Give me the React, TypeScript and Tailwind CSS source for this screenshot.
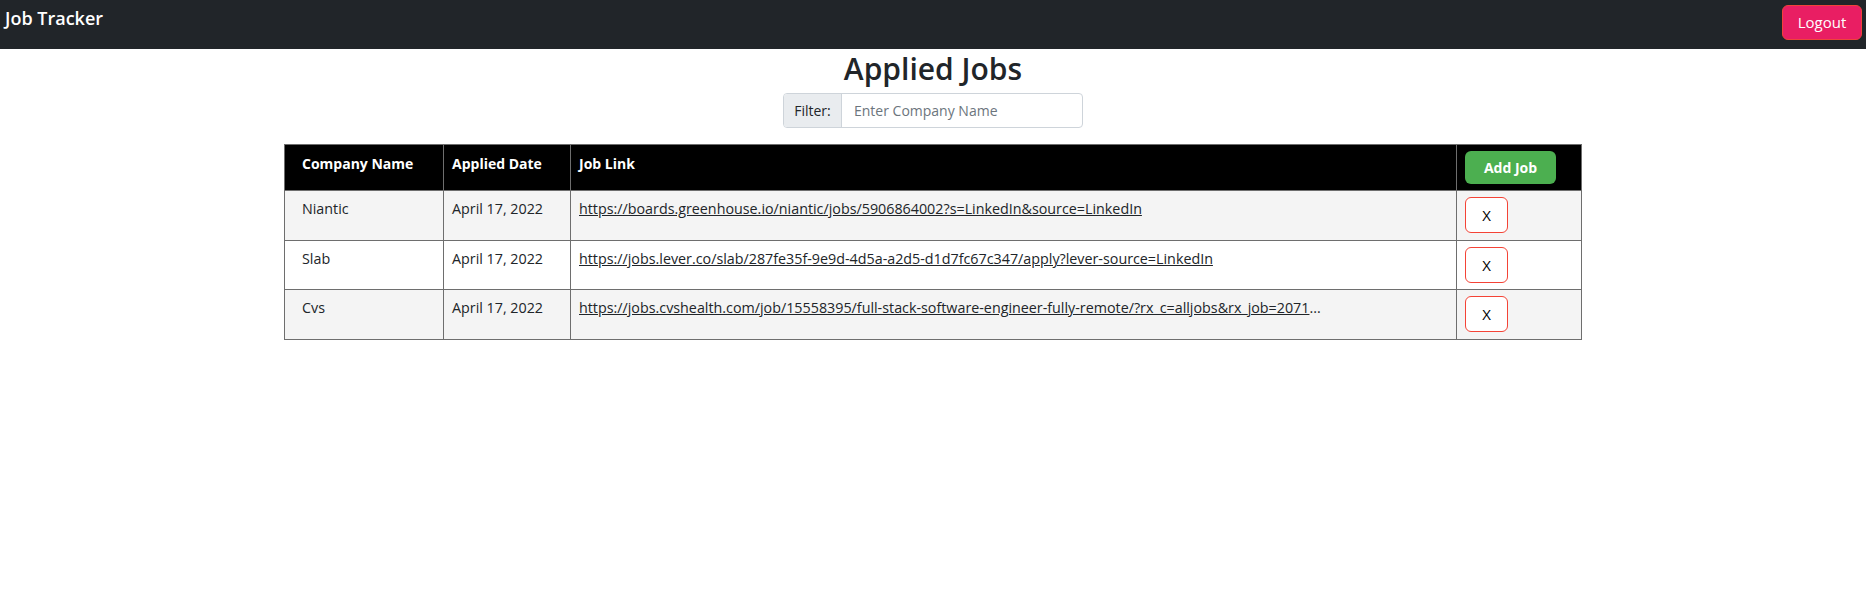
import React, { useState } from 'react';

type Job = {
  id: number;
  company: string;
  date: string;
  link: string;
  truncated?: boolean;
};

const initialJobs: Job[] = [
  {
    id: 1,
    company: 'Niantic',
    date: 'April 17, 2022',
    link: 'https://boards.greenhouse.io/niantic/jobs/5906864002?s=LinkedIn&source=LinkedIn',
  },
  {
    id: 2,
    company: 'Slab',
    date: 'April 17, 2022',
    link: 'https://jobs.lever.co/slab/287fe35f-9e9d-4d5a-a2d5-d1d7fc67c347/apply?lever-source=LinkedIn',
  },
  {
    id: 3,
    company: 'Cvs',
    date: 'April 17, 2022',
    link: 'https://jobs.cvshealth.com/job/15558395/full-stack-software-engineer-fully-remote/?rx_c=alljobs&rx_job=2071',
    truncated: true,
  },
];

const App = () => {
  const [jobs, setJobs] = useState<Job[]>(initialJobs);
  const [filter, setFilter] = useState('');

  const shown = jobs.filter((j) => j.company.toLowerCase().includes(filter.toLowerCase()));

  return (
    <div className="min-h-screen bg-white text-[#212529] font-['Open_Sans',sans-serif]">
      {/* Navbar */}
      <nav className="h-[49px] bg-[#212529] flex items-start justify-between pl-[5px] pr-[4px]">
        <span className="text-white text-[18px] font-semibold leading-none mt-[9px]">Job Tracker</span>
        <button className="mt-[5px] w-[80px] h-[35px] rounded-[6px] bg-[#e91e63] border border-[#f0433a] text-white text-[15px]">
          Logout
        </button>
      </nav>

      {/* Header */}
      <div className="flex flex-col items-center">
        <h2 className="text-[30px] font-semibold leading-[38px] mt-[1px]">Applied Jobs</h2>
        <div className="mt-[5px] flex w-[300px] h-[35px] border border-[#ced4da] rounded-[4px] overflow-hidden text-[14px]">
          <span className="w-[58px] flex items-center justify-center bg-[#e9ecef] border-r border-[#ced4da]">Filter:</span>
          <input
            value={filter}
            onChange={(e) => setFilter(e.target.value)}
            placeholder="Enter Company Name"
            className="flex-1 px-3 outline-none placeholder:text-[#6c757d]"
          />
        </div>
      </div>

      {/* Jobs table */}
      <table className="mt-[16px] mx-auto w-[1297px] table-fixed border-collapse border border-[#6e6e6e] text-[14.3px]">
        <colgroup>
          <col className="w-[159px]" />
          <col className="w-[127px]" />
          <col className="w-[886px]" />
          <col className="w-[125px]" />
        </colgroup>
        <thead>
          <tr className="bg-black text-white h-[46px] text-[14px]">
            <th className="text-left align-top font-bold pl-[17px] pr-2 pt-[8px] border border-[#6e6e6e]">Company Name</th>
            <th className="text-left align-top font-bold px-2 pt-[8px] border border-[#6e6e6e]">Applied Date</th>
            <th className="text-left align-top font-bold px-2 pt-[8px] border border-[#6e6e6e]">Job Link</th>
            <th className="text-left align-top px-2 pt-[6px] border border-[#6e6e6e]">
              <button className="w-[91px] h-[33px] rounded-[6px] bg-[#4caf50] text-white font-bold text-[14px]">
                Add Job
              </button>
            </th>
          </tr>
        </thead>
        <tbody>
          {shown.map((job, i) => (
            <tr key={job.id} className={`${i === 1 ? 'h-[49px]' : 'h-[50px]'} ${i % 2 === 0 ? 'bg-[#f4f4f4]' : 'bg-white'}`}>
              <td className="align-top pl-[17px] pr-2 pt-[7px] border border-[#6e6e6e]">{job.company}</td>
              <td className="align-top px-2 pt-[7px] border border-[#6e6e6e]">{job.date}</td>
              <td className="align-top px-2 pt-[7px] border border-[#6e6e6e] whitespace-nowrap overflow-hidden">
                <a href="#" className="underline text-[#212529]">{job.link}</a>
                {job.truncated && '...'}
              </td>
              <td className="align-top px-2 pt-[6px] border border-[#6e6e6e]">
                <button
                  onClick={() => setJobs(jobs.filter((j) => j.id !== job.id))}
                  className="w-[43px] h-[36px] rounded-[6px] bg-white border border-[#f44336] text-black text-[15px]"
                >
                  X
                </button>
              </td>
            </tr>
          ))}
        </tbody>
      </table>
    </div>
  );
};

export default App;
